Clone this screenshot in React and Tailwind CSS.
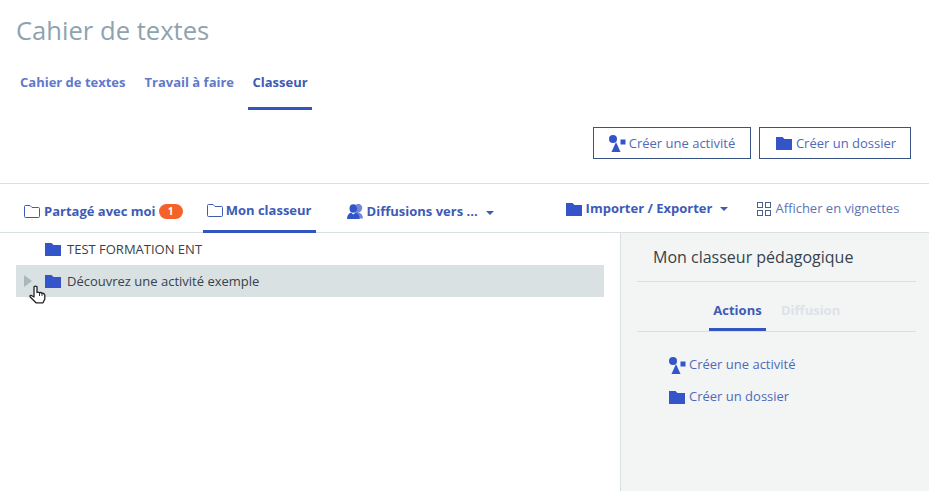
const FONT = "font-['Open_Sans','Noto_Sans',sans-serif]";

function FolderIcon({ className = "w-4 h-[13px]" }) {
  return (
    <svg viewBox="0 0 16 13" className={className}>
      <path d="M0 0 H6.5 L8.5 2 H16 V13 H0 Z" fill="#3355c9" />
    </svg>
  );
}

function FolderOutline() {
  return (
    <svg viewBox="0 0 16 13" className="w-4 h-[13px] shrink-0">
      <path d="M.5 1.5 Q.5 .5 1.5 .5 H6 L8 2.5 H14.5 Q15.5 2.5 15.5 3.5 V11.5 Q15.5 12.5 14.5 12.5 H1.5 Q.5 12.5 .5 11.5 Z" fill="none" stroke="#3d5bb5" strokeWidth="1" />
    </svg>
  );
}

function ActivityIcon() {
  return (
    <svg viewBox="0 0 17 17" className="w-[17px] h-[17px] shrink-0">
      <circle cx="4" cy="4" r="4" fill="#3355c9" />
      <rect x="11.5" y="4.5" width="5" height="5" fill="#3355c9" />
      <path d="M7 7 L11.5 17 H2.5 Z" fill="#3355c9" />
    </svg>
  );
}

function UsersIcon() {
  return (
    <svg viewBox="0 0 16 15" className="w-4 h-[15px] shrink-0">
      <path d="M9 .8 A3.8 4.2 0 1 1 11 8.2 Q15.5 9 16 14.5 H12 Q11.5 10.5 8.5 8.8 Q11 5 9 .8 Z" fill="#3355c9" opacity=".7" />
      <ellipse cx="6.3" cy="4.5" rx="3.8" ry="4.3" fill="#3355c9" />
      <path d="M0 15 Q0 10 4 8.5 L6.3 10.5 L8.6 8.5 Q12.6 10 12.6 15 Z" fill="#3355c9" />
    </svg>
  );
}

function GridIcon() {
  return (
    <svg viewBox="0 0 14 14" className="w-[14px] h-[14px] shrink-0" fill="none" stroke="#4a6190">
      <rect x=".5" y=".5" width="5" height="5" />
      <rect x="8.5" y=".5" width="5" height="5" />
      <rect x=".5" y="8.5" width="5" height="5" />
      <rect x="8.5" y="8.5" width="5" height="5" />
    </svg>
  );
}

function Caret() {
  return <span className="w-0 h-0 border-x-[4px] border-x-transparent border-t-[4px] border-t-[#3d5bb5]" />;
}

function HandCursor() {
  return (
    <svg viewBox="0 0 17 19" className="absolute left-[29px] top-[285px] w-[17px] h-[19px]">
      <path
        d="M5 1.8 Q6.5 .5 8 1.8 V7.5 Q9.5 6.8 10.5 7.8 Q12 7 13 8.3 Q15 8 15.8 10 V14 L14 17.8 H7 L1.2 12 Q.5 10.5 2 10.3 L5 12 Z"
        fill="#fff"
        stroke="#222"
        strokeWidth="1.3"
        strokeLinejoin="round"
      />
      <path d="M10.5 8 V11 M13 8.5 V11" stroke="#222" strokeWidth=".9" />
    </svg>
  );
}

export default function App() {
  return (
    <div className={`${FONT} relative w-[929px] h-[491px] overflow-hidden bg-white flex flex-col`}>
      {/* Page header */}
      <div className="h-[183px] shrink-0 pl-[17px] pr-[18px] flex flex-col">
        <h1 className="mt-[14px] -ml-[1px] h-[34px] leading-[34px] text-[25.6px] text-[#8ea3b0]">Cahier de textes</h1>
        <div className="mt-[14px] flex text-[13px] font-bold text-[#6279c9] h-[48px]">
          <a className="px-[3px] pt-[11px] leading-[18px] mr-[11px]">Cahier de textes</a>
          <a className="px-[5px] pt-[11px] leading-[18px] mr-[9px]">Travail à faire</a>
          <a className="w-[64px] text-center pt-[11px] leading-[18px] text-[#3d5bb5] border-b-[3px] border-[#3355c0]">Classeur</a>
        </div>
        <div className="mt-[17px] flex justify-end gap-[8px] text-[13px] text-[#4f6ab8]">
          <button className="w-[158px] h-[32px] border border-[#3a5488] flex items-center justify-center gap-[3px]">
            <ActivityIcon />
            <span className="pt-[2px]">Créer une activité</span>
          </button>
          <button className="w-[152px] h-[32px] pl-[2px] border border-[#3a5488] flex items-center justify-center gap-[4px]">
            <FolderIcon />
            <span className="pt-[2px]">Créer un dossier</span>
          </button>
        </div>
      </div>

      {/* Sub navigation */}
      <div className="h-[50px] shrink-0 border-y border-[#d9e0e3] flex items-stretch text-[13px] font-bold text-[#3d5bb5]">
        <div className="ml-[24px] pt-[7px] flex items-center gap-[3px] h-full">
          <FolderOutline />
          <span className="ml-[1px]">Partagé avec moi</span>
          <span className="w-[24px] h-[15px] rounded-full bg-[#f4622a] text-white text-[10px] leading-[15px] text-center">1</span>
        </div>
        <div className="ml-[20px] w-[113px] pt-[7px] flex items-center justify-center gap-[3px] border-b-[3px] border-[#3355c0] h-[49px]">
          <FolderOutline />
          Mon classeur
        </div>
        <div className="ml-[31px] pt-[7px] flex items-center gap-[4px]">
          <UsersIcon />
          Diffusions vers ...
          <span className="ml-[4px] mt-[2px] flex"><Caret /></span>
        </div>
        <div className="ml-[72px] flex pt-[2px] items-center gap-[4px]">
          <FolderIcon />
          Importer / Exporter
          <span className="ml-[4px] flex"><Caret /></span>
        </div>
        <div className="ml-[29px] pt-[2px] flex items-center gap-[4px] font-normal text-[#5a74b5]">
          <GridIcon />
          Afficher en vignettes
        </div>
      </div>

      {/* Tree + side panel */}
      <div className="flex-1 flex min-h-0">
        <div className="w-[620px] pl-[16px] pr-[16px] text-[13px] text-[#37424a]">
          <div className="h-[32px] flex items-center pl-[29px] gap-[6px]">
            <FolderIcon />
            <span className="pt-[2px]">TEST FORMATION ENT</span>
          </div>
          <div className="h-[32px] flex items-center bg-[#d9e1e3] pl-[8px]">
            <span className="w-0 h-0 border-y-[6px] border-y-transparent border-l-[8px] border-l-[#a9b8bd]" />
            <span className="ml-[13px] mr-[6px] flex"><FolderIcon /></span>
            <span className="pt-[2px]">Découvrez une activité exemple</span>
          </div>
        </div>
        <div className="flex-1 bg-[#f3f5f5] border-l border-[#d9e0e3] pl-[16px] pr-[13px]">
          <div className="h-[49px] pl-[16px] flex items-center text-[16px] text-[#37424a] border-b border-[#d9e0e3]">
            Mon classeur pédagogique
          </div>
          <div className="h-[50px] flex pl-[72px] text-[13px] font-bold border-b border-[#d9e0e3]">
            <span className="w-[57px] h-full text-center pt-[19px] leading-[18px] text-[#3d5bb5] border-b-[3px] border-[#3355c0]">Actions</span>
            <span className="ml-[15px] pt-[19px] leading-[18px] text-[#dde3e8]">Diffusion</span>
          </div>
          <div className="pl-[32px] pt-[17px] text-[13px] text-[#4f6ab8]">
            <div className="h-[32px] flex items-center gap-[3px]">
              <ActivityIcon />
              Créer une activité
            </div>
            <div className="h-[32px] flex items-center gap-[4px]">
              <FolderIcon />
              Créer un dossier
            </div>
          </div>
        </div>
      </div>

      <HandCursor />
    </div>
  );
}
